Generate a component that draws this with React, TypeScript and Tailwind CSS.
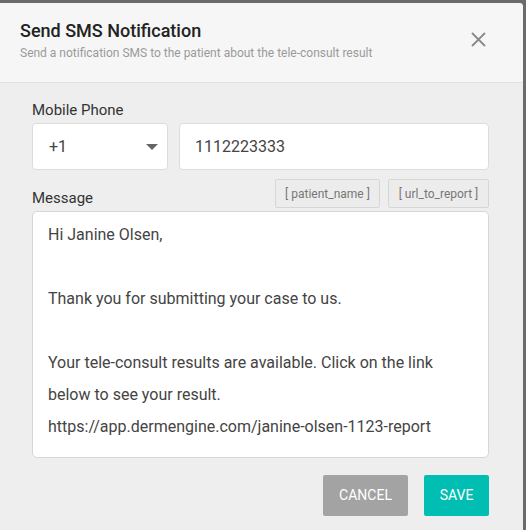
import React from "react";

const font = { fontFamily: "Roboto, 'Noto Sans', sans-serif" };

const lines = [
  "Hi Janine Olsen,",
  "",
  "Thank you for submitting your case to us.",
  "",
  "Your tele-consult results are available. Click on the link",
  "below to see your result.",
  "https://app.dermengine.com/janine-olsen-1123-report",
];

export default function App() {
  return (
    <div className="w-[526px] h-[530px] bg-[#6b6b6b] pt-[3px] pr-[3px]" style={font}>
      <div className="h-full bg-[#eeeeee] rounded-tr-[4px] overflow-hidden flex flex-col">
        {/* header */}
        <div className="h-[80px] bg-[#f6f6f6] border-b border-[#e2e2e2] pl-[20px] pr-[36px] flex items-start justify-between">
          <div className="pt-[17px]">
            <h2 className="text-[18px] leading-[22px] font-medium text-[#222]">Send SMS Notification</h2>
            <p className="text-[12px] leading-[16px] mt-[3px] text-[#9a9a9a]">
              Send a notification SMS to the patient about the tele-consult result
            </p>
          </div>
          <button className="mt-[27px] w-[18px] h-[18px] flex items-center justify-center text-[#8a8a8a]">
            <svg width="15" height="15" viewBox="0 0 15 15" fill="none" stroke="currentColor" strokeWidth="1.8">
              <path d="M1 1L14 14M14 1L1 14" />
            </svg>
          </button>
        </div>

        {/* body */}
        <div className="pl-[32px] pr-[34px] pt-[17px]">
          <label className="block text-[15px] leading-[20px] text-[#333]">Mobile Phone</label>
          <div className="mt-[3px] flex gap-[11px]">
            <div className="w-[136px] h-[47px] bg-white border border-[#dcdcdc] rounded-[4px] flex items-center justify-between pl-[16px] pr-[9px]">
              <span className="text-[16px] text-[#444]">+1</span>
              <svg width="12" height="6" viewBox="0 0 12 6">
                <path d="M0 0H12L6 6Z" fill="#666" />
              </svg>
            </div>
            <div className="flex-1 h-[47px] bg-white border border-[#dcdcdc] rounded-[4px] flex items-center pl-[15px]">
              <span className="text-[16px] text-[#444]">1112223333</span>
            </div>
          </div>

          <div className="mt-[9px] flex items-end justify-between">
            <label className="text-[15px] leading-[20px] text-[#333] mb-[3px]">Message</label>
            <div className="flex gap-[8px] mb-[3px]">
              <span className="w-[105px] h-[29px] border border-[#d6d6d6] bg-[#ececec] rounded-[2px] flex items-center justify-center text-[12px] text-[#777]">
                [ patient_name ]
              </span>
              <span className="w-[101px] h-[29px] border border-[#d6d6d6] bg-[#ececec] rounded-[2px] flex items-center justify-center text-[12px] text-[#777]">
                [ url_to_report ]
              </span>
            </div>
          </div>

          <div className="h-[247px] bg-white border border-[#d6d6d6] rounded-[5px] pl-[15px] pt-[7px]">
            {lines.map((l, i) => (
              <div key={i} className="text-[16px] leading-[32px] h-[32px] text-[#444]">
                {l}
              </div>
            ))}
          </div>

          <div className="mt-[17px] flex justify-end gap-[16px]">
            <button className="w-[85px] h-[41px] bg-[#a3a3a3] text-white text-[14px] rounded-[2px]">CANCEL</button>
            <button className="w-[65px] h-[41px] bg-[#00bfb2] text-white text-[14px] rounded-[2px]">SAVE</button>
          </div>
        </div>
      </div>
    </div>
  );
}
